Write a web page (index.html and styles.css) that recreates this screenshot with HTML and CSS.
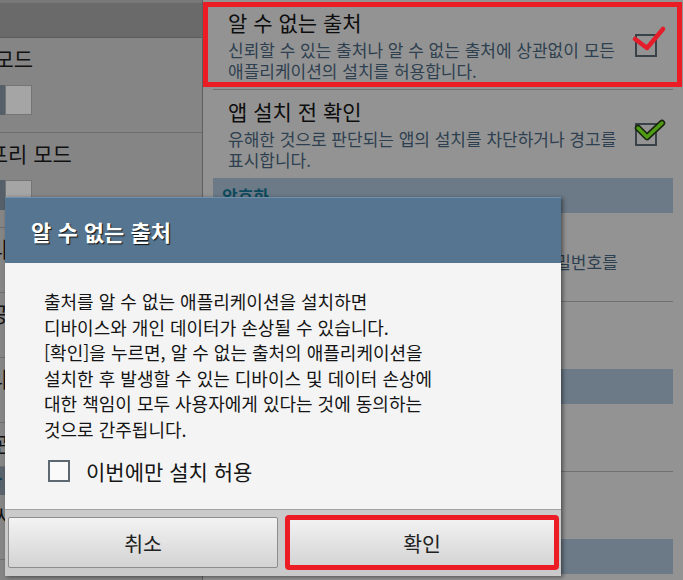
FILE: index.html
```html
<!DOCTYPE html>
<html lang="ko">
<head>
    <meta charset="UTF-8">
    <title>보안</title>
    <link rel="stylesheet" href="styles.css">
</head>
<body>
    <div class="screen">
        <aside class="menu-pane">
            <div class="menu-bar"></div>
            <ul class="menu-list">
                <li class="menu-item">
                    <div class="menu-title">차단 모드</div>
                    <span class="toggle"><span class="toggle-thumb"></span></span>
                </li>
                <li class="menu-item">
                    <div class="menu-title">핸즈프리 모드</div>
                    <span class="toggle"><span class="toggle-thumb"></span></span>
                </li>
                <li class="menu-item short"><div class="menu-title">애플리케이션 관리</div></li>
                <li class="menu-item short"><div class="menu-title">저장공간</div></li>
                <li class="menu-item short"><div class="menu-title">배터리 사용량</div></li>
                <li class="menu-item shorter"><div class="menu-title">모듈 관리</div></li>
                <li class="menu-header">사용자 설정</li>
                <li class="menu-item short"><div class="menu-title">위치 서비스</div></li>
            </ul>
        </aside>

        <main class="pref-pane">
            <ul class="pref-list">
                <li class="pref-item flagged">
                    <div class="pref-text">
                        <div class="pref-title">알 수 없는 출처</div>
                        <div class="pref-desc">신뢰할 수 있는 출처나 알 수 없는 출처에 상관없이 모든 애플리케이션의 설치를 허용합니다.</div>
                    </div>
                    <span class="check">
                        <svg class="mark-red" width="36" height="32" viewBox="0 0 36 32">
                            <polyline points="4,15 16,24 32,5" fill="none" stroke="#e51d2b" stroke-width="4.5" stroke-linecap="round" stroke-linejoin="round"/>
                        </svg>
                    </span>
                </li>
                <li class="pref-item no-line">
                    <div class="pref-text">
                        <div class="pref-title">앱 설치 전 확인</div>
                        <div class="pref-desc">유해한 것으로 판단되는 앱의 설치를 차단하거나 경고를 표시합니다.</div>
                    </div>
                    <span class="check">
                        <svg class="mark-green" width="34" height="26" viewBox="0 0 34 26">
                            <polyline points="5,11 14,20 29,6" fill="none" stroke="#17230c" stroke-width="6.5" stroke-linecap="round" stroke-linejoin="round"/>
                            <polyline points="5,11 14,20 29,6" fill="none" stroke="#4f9b14" stroke-width="3.5" stroke-linecap="round" stroke-linejoin="round"/>
                        </svg>
                    </span>
                </li>
                <li class="pref-header">암호화</li>
                <li class="pref-item">
                    <div class="pref-text">
                        <div class="pref-title">기기 암호화</div>
                        <div class="pref-desc">기기를 켤 때마다 해독하려면 숫자 PIN 또는 비밀번호를 입력해야 합니다.</div>
                    </div>
                </li>
                <li class="pref-item no-line">
                    <div class="pref-text">
                        <div class="pref-title">외장 SD 카드 암호화</div>
                        <div class="pref-desc">SD 카드 데이터를 보호합니다.</div>
                    </div>
                </li>
                <li class="pref-header">SIM 카드 잠금</li>
                <li class="pref-item">
                    <div class="pref-text">
                        <div class="pref-title">SIM 카드 잠금 설정</div>
                        <div class="pref-desc">SIM 카드 잠금을 설정합니다.</div>
                    </div>
                </li>
                <li class="pref-item no-line">
                    <div class="pref-text">
                        <div class="pref-title">비밀번호 표시</div>
                        <div class="pref-desc">입력한 비밀번호를 표시합니다.</div>
                    </div>
                </li>
                <li class="pref-header">기기 관리</li>
            </ul>
        </main>

        <div class="dialog">
            <div class="dialog-head">알 수 없는 출처</div>
            <div class="dialog-body">
                <p class="dialog-msg">출처를 알 수 없는 애플리케이션을 설치하면 디바이스와 개인 데이터가 손상될 수 있습니다.<br>[확인]을 누르면, 알 수 없는 출처의 애플리케이션을 설치한 후 발생할 수 있는 디바이스 및 데이터 손상에 대한 책임이 모두 사용자에게 있다는 것에 동의하는 것으로 간주됩니다.</p>
                <label class="dialog-option">
                    <span class="box"></span>
                    <span>이번에만 설치 허용</span>
                </label>
            </div>
            <div class="dialog-actions">
                <button class="dialog-btn">취소</button>
                <button class="dialog-btn flagged-btn">확인</button>
            </div>
        </div>
    </div>
</body>
</html>
```

FILE: styles.css
```css
* {
    box-sizing: border-box;
}
body {
    margin: 0;
    font-family: "Noto Sans CJK KR", "Noto Sans", sans-serif;
    color: #111;
    background-color: #939393;
    word-break: keep-all;
}
ul {
    list-style: none;
    margin: 0;
    padding: 0;
}
.screen {
    position: relative;
    display: flex;
    width: 683px;
    height: 580px;
    overflow: hidden;
}

/* left settings menu, dimmed behind the dialog */
.menu-pane {
    width: 203px;
    flex-shrink: 0;
    background-color: #858585;
    border-right: 1px solid #5f5f5f;
    overflow: hidden;
}
.menu-bar {
    height: 38px;
    background-color: #6a6a6a;
    border-top: 3px solid #787878;
    border-bottom: 1px solid #5c5c5c;
}
.menu-list {
    margin-left: -50px;
}
.menu-item {
    padding: 7px 0 17px;
    border-bottom: 1px solid #6e6e6e;
}
.menu-item.short {
    height: 65px;
}
.menu-item.shorter {
    height: 44px;
}
.menu-title {
    font-size: 21px;
    line-height: 26px;
    white-space: nowrap;
}
.toggle {
    display: flex;
    justify-content: flex-end;
    width: 82px;
    height: 30px;
    margin-top: 14px;
    background-color: #56606a;
}
.toggle-thumb {
    width: 27px;
    height: 30px;
    background-color: #a5a5a5;
    border: 1px solid #747474;
}
.menu-header {
    height: 28px;
    background-color: #5b646c;
    color: #0f3f4f;
    font-size: 16px;
    font-weight: bold;
    padding-left: 8px;
}

/* right preference list */
.pref-pane {
    flex: 1;
    padding: 1px 10px 0;
    background-color: #939393;
}
.pref-item {
    position: relative;
    display: flex;
    align-items: center;
    padding: 8px 16px 8px 15px;
    border-bottom: 1px solid #707070;
}
.pref-item.no-line {
    border-bottom: none;
}
.pref-item.flagged::after {
    content: "";
    position: absolute;
    top: 1px;
    bottom: 2px;
    left: -10px;
    right: -9px;
    border: 5px solid #ec1c24;
}
.pref-text {
    flex: 1;
}
.pref-title {
    font-size: 21px;
    line-height: 26px;
    color: #0d0d0d;
}
.pref-desc {
    max-width: 400px;
    margin-top: 4px;
    font-size: 17px;
    line-height: 21px;
    color: #2e4050;
}
.check {
    position: relative;
    width: 22px;
    height: 23px;
    border: 2px solid #3a4249;
}
.mark-red {
    position: absolute;
    left: -6px;
    top: -12px;
}
.mark-green {
    position: absolute;
    left: -4px;
    top: -8px;
}
.pref-header {
    height: 35px;
    padding: 5px 9px 0;
    background-color: #6c7a87;
    color: #0e4a5d;
    font-size: 17px;
    font-weight: bold;
}

/* dialog */
.dialog {
    position: absolute;
    left: 5px;
    top: 197px;
    width: 556px;
    box-shadow: 2px 1px 4px rgba(0,0,0,0.45);
}
.dialog-head {
    display: flex;
    align-items: center;
    height: 66px;
    padding-left: 26px;
    background-color: #557591;
    border-top: 1px solid #7091ab;
    color: white;
    font-size: 22px;
    font-weight: bold;
    text-shadow: 1px 1px 1px #101010;
}
.dialog-body {
    padding: 26px 20px 27px 39px;
    background-color: #f4f4f4;
    font-size: 18px;
    line-height: 25.5px;
    color: #151515;
}
.dialog-msg {
    max-width: 410px;
    margin: 0;
}
.dialog-option {
    display: flex;
    align-items: center;
    gap: 16px;
    margin-top: 18px;
    padding-left: 4px;
    font-size: 21px;
    line-height: 22px;
}
.box {
    width: 22px;
    height: 22px;
    border: 2px solid #5d6870;
    background-color: #fafafa;
}
.dialog-actions {
    display: flex;
    gap: 9px;
    padding: 7px 4px 8px 3px;
    background-color: #cacaca;
    border-top: 1px solid #a2a2a2;
}
.dialog-btn {
    flex: 1;
    height: 51px;
    font-family: inherit;
    font-size: 20.5px;
    color: #222;
    background: linear-gradient(#f3f3f3, #d3d3d3);
    border: 1px solid #8d8d8d;
    border-radius: 2px;
}
.flagged-btn {
    outline: 5px solid #ec1c24;
    outline-offset: -3px;
}
```
